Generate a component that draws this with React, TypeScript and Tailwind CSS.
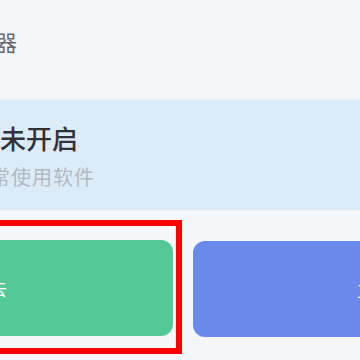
const App = () => {
  return (
    <div
      className="w-[360px] h-[360px] overflow-hidden bg-[#f6f7fa] flex flex-col"
      style={{ fontFamily: '"Noto Sans CJK SC", "Noto Sans", sans-serif' }}
    >
      {/* title */}
      <div className="pt-[30px] -ml-[49px] text-[22px] leading-none text-[#666a70] whitespace-nowrap">
        加速器
      </div>

      {/* status card */}
      <div className="mt-[48px] h-[110px] bg-[#dcebf8] shadow-[0_-1px_3px_rgba(0,0,0,0.04)] pt-[25px]">
        <div className="text-[26px] leading-none font-medium text-[#2f3238] whitespace-nowrap">
          未开启
        </div>
        <div className="mt-[16px] -ml-[94px] text-[20px] leading-none tracking-[1px] text-[#b3b9c2] whitespace-nowrap">
          不影响正常使用软件
        </div>
      </div>

      {/* actions */}
      <div className="mt-[10px] flex items-start">
        <div className="-ml-[120px] shrink-0 border-[6px] border-[#ff0000] pt-[14px] pb-[12px] pr-[3px]">
          <div className="w-[287px] h-[96px] rounded-[12px] bg-[#55c995] flex items-center justify-end pr-[166px] text-[18px] text-white whitespace-nowrap">
            稍后再去
          </div>
        </div>
        <div className="ml-[11px] mt-[21px] w-[220px] h-[96px] shrink-0 rounded-[12px] bg-[#6a8aeb] flex items-center pl-[164px] text-[18px] text-white whitespace-nowrap">
          立即开启
        </div>
      </div>
    </div>
  );
};

export default App;
